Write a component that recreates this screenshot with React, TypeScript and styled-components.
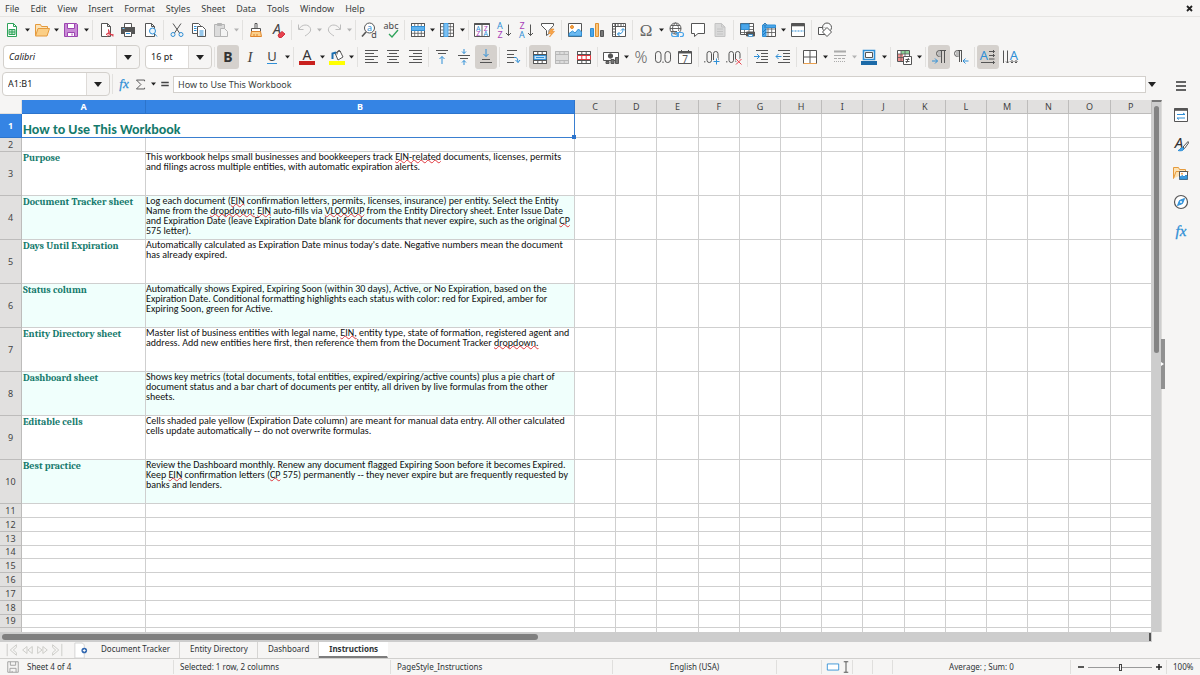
import React from "react";
import styled, { createGlobalStyle, css } from "styled-components";

const INK = "#555";
const BLUE = "#2f8fd6";
const PURPLE = "#a83fb8";
const TEAL = "#147a6c";
const UI_FONT = `"Noto Sans", "Open Sans", sans-serif`;

const GlobalStyle = createGlobalStyle`
  * { box-sizing: border-box; }
  html, body, #root { height: 100%; }
  body {
    margin: 0;
    background: #f6f5f4;
    color: #3a3f41;
    font: 9px/12px ${UI_FONT};
    overflow: hidden;
  }
  button, input, select { font: inherit; color: inherit; margin: 0; }
`;

/* ---------- icons ---------- */

const glyph = (char: string, x: number, y: number, size: number, fill: string, extra: React.SVGProps<SVGTextElement> = {}) => (
  <text x={x} y={y} textAnchor="middle" fontSize={size} fontFamily="Noto Sans, sans-serif" fill={fill} stroke="none" {...extra}>
    {char}
  </text>
);

const page = <path d="M3.5 1.5h6l3 3v10h-9z M9.5 1.5v3h3" />;
const lines = (rows: [number, number, number][]) => (
  <path d={rows.map(([x, y, w]) => `M${x} ${y}h${w}`).join("")} />
);
const gridPath = "M1.5 1.5h13v13h-13z M1.5 4.7h13 M1.5 8h13 M1.5 11.3h13 M4.7 1.5v13 M8 1.5v13 M11.3 1.5v13";
const mergeGrid = "M1.5 2.5h13v12h-13z M1.5 5.5h13 M1.5 11.5h13 M5.8 2.5v3 M10.2 2.5v3 M5.8 11.5v3 M10.2 11.5v3";

const ICONS: Record<string, React.ReactNode> = {
  newDoc: (
    <>
      <path d="M3.5 1.5h6l3 3v10h-9z" fill="#fff" stroke="#2fa35a" />
      <path d="M9.5 1.5v3h3" stroke="#2fa35a" />
      <path d="M5 7.5h6v5H5z M5 10h6 M8 7.5v5" fill="#bfe8cc" stroke="#2fa35a" />
    </>
  ),
  open: (
    <>
      <path d="M1.5 13.5v-11h5l1 2h6v3" fill="#fbe3b8" stroke="#e59a3c" />
      <path d="M1.5 14 4 6.5h11.5L13 14z" fill="#fbcf87" stroke="#e59a3c" />
    </>
  ),
  save: (
    <>
      <path d="M1.5 1.5h12l1 1v12h-13z" fill="#c98ad6" stroke="#9c45b0" />
      <path d="M4.5 1.5h7v5h-7z M4.5 10.5h7v4h-7z" fill="#fff" stroke="#9c45b0" />
      <path d="M9 11.5v2" stroke="#9c45b0" />
    </>
  ),
  pdf: (
    <>
      <g fill="#fff">{page}</g>
      <path d="M15 14.5c-2-3-4-4-7-2 2 0 3-2 2.500-5 1 4 3 6 5 5.500-2-1-5-.5-6.500 1.500" stroke="#dc3b4a" />
    </>
  ),
  print: (
    <>
      <path d="M4.5 5V1.5h7V5" fill="#fff" />
      <path d="M1 5h14v7H1z" fill="#555" stroke="none" />
      <path d="M4.5 9.5h7v5h-7z" fill="#fff" />
      <path d="M6 11.5h4" stroke={BLUE} />
      <path d="M2.5 6.5h2" stroke="#6cc0f2" />
    </>
  ),
  preview: (
    <>
      <g fill="#fff">{page}</g>
      <circle cx="10.5" cy="9" r="3" fill="#e8f4fd" stroke={BLUE} />
      <path d="m12.5 11.5 2.500 3" stroke={BLUE} />
    </>
  ),
  cut: (
    <>
      <path d="M4 1.5l6.500 9.500M12 1.5 5.500 11" />
      <circle cx="4" cy="12.5" r="2" stroke={BLUE} />
      <circle cx="12" cy="12.5" r="2" stroke={BLUE} />
    </>
  ),
  copy: (
    <>
      <path d="M1.5 1.5h6l2 2v8h-8z" fill="#fff" />
      <path d="M6.5 4.5h5l3 3v7h-8z" fill="#fff" />
      <path d="M3 4.5h2.500M3 6.5h2.500M3 8.5h2.500M8.5 9h4M8.5 11h4M8.5 13h4" stroke={BLUE} />
    </>
  ),
  paste: (
    <>
      <path d="M1.5 2.5h10v12h-10z" fill="#dcdcdc" stroke="#b5b5b5" />
      <path d="M4.5 1.5h4v2h-4z" fill="#b5b5b5" stroke="#b5b5b5" />
      <path d="M7.5 6.5h4l3 3v5h-7z" fill="#f4f4f4" stroke="#b5b5b5" />
    </>
  ),
  clone: (
    <>
      <path d="M7 1.5h2v5H7z" fill="#fff" />
      <path d="M3.5 6.5h9v3h-9z" fill="#fff" />
      <path d="M3.5 9.5h9l1 5h-11z" fill="#fbd08c" stroke="#e0852b" />
      <path d="M6 12v2M9 12v2" stroke="#e0852b" />
    </>
  ),
  clear: (
    <>
      {glyph("A", 7, 12, 14, "#444", { fontStyle: "italic" })}
      <path d="m8 13 4-3.500 3 2.500-3.500 3.500H9z" fill="#e8434f" stroke="#d02f3d" />
    </>
  ),
  undo: <path d="M1.5 2.5v5h5M2 7c3-5 9-5 11-1.500s-1 6-5 8.500" stroke="#bdbdbd" />,
  redo: <path d="M14.5 2.5v5h-5M14 7c-3-5-9-5-11-1.500s1 6 5 8.500" stroke="#bdbdbd" />,
  find: (
    <>
      <circle cx="8.5" cy="6" r="5" fill="#fff" />
      <path d="m5 10-4 4.500" strokeWidth="1.6" />
      {glyph("a", 8.5, 9, 9, BLUE)}
      {glyph("d", 13, 15.5, 9, "#444")}
    </>
  ),
  spell: (
    <>
      {glyph("abc", 8, 7, 9, "#444")}
      <path d="m6 12 3 3 6-7" stroke="#2fa35a" strokeWidth="1.3" />
    </>
  ),
  fx: glyph("fx", 8, 13, 15, BLUE, { fontStyle: "italic", fontFamily: "Liberation Serif, serif", stroke: BLUE, strokeWidth: 0.3 }),
  rows: (
    <>
      <path d="M1.5 1.5h13v13h-13z" fill="#fff" />
      <path d={gridPath} strokeWidth=".8" />
      <path d="M1.5 4.5h13v4h-13z" fill="#5fb2ee" stroke={BLUE} />
    </>
  ),
  cols: (
    <>
      <path d="M1.5 1.5h13v13h-13z" fill="#fff" />
      <path d={gridPath} strokeWidth=".8" />
      <path d="M5 1.5h4v13H5z" fill="#7cc0f2" stroke="#4ba6ea" />
    </>
  ),
  sort: (
    <>
      <path d="M.5 1.5h15v13H.5z M8 1.5v13" fill="#fff" />
      <path d="M.5 2h15" strokeWidth="2" />
      {glyph("A", 4.3, 8.5, 7, BLUE)}
      {glyph("Z", 4.3, 14, 7, PURPLE)}
      {glyph("Z", 11.7, 8.5, 7, PURPLE)}
      {glyph("A", 11.7, 14, 7, BLUE)}
    </>
  ),
  sortAsc: (
    <>
      {glyph("A", 4, 7, 9, BLUE)}
      {glyph("Z", 4, 15.5, 9, PURPLE)}
      <path d="M12.5 2.5v11M10 11l2.500 2.500L15 11" />
    </>
  ),
  sortDesc: (
    <>
      {glyph("Z", 4, 7, 9, PURPLE)}
      {glyph("A", 4, 15.5, 9, BLUE)}
      <path d="M12.5 2.5v11M10 11l2.500 2.500L15 11" />
    </>
  ),
  filter: (
    <>
      <path d="M1.5 1.5h12v2L9 8.5v3l-2.500 2v-5l-5-5z" fill="#fff" />
      <path d="m11 7-2.500 4.500h3L9.500 15l5-5.500h-2.500L14 7z" fill="#f9a64a" stroke="#e88a2a" strokeWidth=".6" />
    </>
  ),
  image: (
    <>
      <path d="M1.5 1.5h13v13h-13z" fill="#fff" />
      <circle cx="5" cy="5" r="1.5" fill="#f5a54a" stroke="#e88a2a" />
      <path d="M2 14v-2.500L5.500 9 8 11l3.500-4 3 3v4z" fill="#6bb9f0" stroke={BLUE} />
    </>
  ),
  chart: (
    <>
      <path d="M1.5 6.5h3v8h-3z" fill="#4ba6ea" stroke={BLUE} />
      <path d="M6.5 1.5h3v13h-3z" fill="#fbc57c" stroke="#e0902f" />
      <path d="M11.5 8.5h3v6h-3z" fill="#777" />
    </>
  ),
  pivot: (
    <>
      <path d="M1.5 1.5h13v13h-13z M1.5 4.5h13 M4.5 1.5v13" fill="#fff" />
      <path d="M3 3h1M6 3h7M3 6v7" strokeDasharray="2 1" />
      <path d="M6.5 12c4 0 5.500-1.500 5.500-5M10 8.5l2-2 2 2M8.5 10l-2 2 2 2" stroke={BLUE} />
    </>
  ),
  omega: glyph("Ω", 8, 14, 17, "#666", { fontFamily: "Liberation Serif, serif" }),
  link: (
    <>
      <circle cx="7.5" cy="6.5" r="5.5" fill="#fff" />
      <path d="M2 6.5h11M3 3.5h9M3 9.5h6M7.5 1c-4 3-4 8 0 11M7.5 1c3.500 3 3.500 6 3 8" strokeWidth=".9" />
      <path d="M7 10.5h1.500a2 2 0 0 1 0 4H5.5a2 2 0 0 1-1-3.700M11 14.5a2 2 0 0 1 0-4h2.500a2 2 0 0 1 0 4H12" stroke="#4aa5ea" strokeWidth="1.2" />
    </>
  ),
  comment: <path d="M1.5 1.5h13v10H8l-3.500 3v-3h-3z" fill="#fff" />,
  note: (
    <>
      <path d="M3 1.5h6.500l3.500 3.500v9.500H3z" fill="#d9d9d9" stroke="#c4c4c4" />
      <path d="M5 7h6M5 9.5h6M5 12h6M9.5 1.5V5H13" stroke="#c4c4c4" />
    </>
  ),
  printArea: (
    <>
      <path d="M1.5 1.5h13v11h-13z" fill="#fff" />
      <path d="M1.5 4.5h13M1.5 7.5h13M1.5 10.5h13M5.5 1.5v11M10 1.5v11" strokeWidth=".8" />
      <path d="M2 2h8v5.500H2z" fill="#4ba6ea" stroke={BLUE} />
      <path d="M7.5 10h8v4h-8z" fill="#555" />
      <path d="M9.5 12.5h4v2h-4z" fill="#fff" stroke={BLUE} strokeWidth=".8" />
    </>
  ),
  freeze: (
    <>
      <path d="M3.5 3.5h11v11h-11z" fill="#fff" />
      <path d="M3.5 7h11M3.5 10.5h11M7 3.5v11M10.7 3.5v11" strokeWidth=".8" />
      <path d="M1.5 3h13v2.500H5v9H1.5z" fill="#4ba6ea" stroke={BLUE} />
      <path d="M2 13l3-3M2 10l3-3M4 6V1M2 3l2-2 2 2" stroke="#1c6fb0" strokeWidth=".8" />
    </>
  ),
  split: (
    <>
      <path d="M1.5 1.5h13v13h-13z" fill="#fff" />
      <path d="M1.5 3h13" strokeWidth="2.6" />
      <path d="M1.5 9h13" stroke={BLUE} strokeDasharray="2 1" />
    </>
  ),
  shapes: (
    <>
      <path d="M1.5 5.5h7v7h-7z" fill="#fff" />
      <circle cx="10" cy="5.5" r="4.5" fill="#fff" fillOpacity=".7" />
      <path d="m10 5.5 4.500 4.500-4.500 4.500L5.500 10z" fill="#fff" />
    </>
  ),
  bold: glyph("B", 8, 13, 14, "#333", { fontWeight: 700 }),
  italic: glyph("I", 8, 13, 15, "#444", { fontStyle: "italic", fontFamily: "Liberation Serif, serif" }),
  underline: (
    <>
      {glyph("U", 8, 12, 13, "#444")}
      <path d="M3 14.5h10" stroke={BLUE} />
    </>
  ),
  fontColor: (
    <>
      {glyph("A", 8, 11, 14, "#333")}
      <path d="M0 12h16v4H0z" fill="#c9211e" stroke="none" />
    </>
  ),
  highlight: (
    <>
      <path d="m6 4 5-2 3 6-5 3z" fill="#fff" />
      <path d="M8 5.5c0-5 3-5 3.500-2.500" />
      <path d="M3.5 10V4.500L7 3.5" stroke="#1c6fb0" strokeWidth="2" />
      <path d="M0 12h16v4H0z" fill="#ffff00" stroke="none" />
    </>
  ),
  alignLeft: lines([[2, 1.5, 13], [2, 4.5, 9], [2, 7.5, 13], [2, 10.5, 9], [2, 13.5, 13]]),
  alignCenter: lines([[2, 1.5, 12], [4, 4.5, 8], [2, 7.5, 12], [4, 10.5, 8], [2, 13.5, 12]]),
  alignRight: lines([[2, 1.5, 13], [6, 4.5, 9], [2, 7.5, 13], [6, 10.5, 9], [2, 13.5, 13]]),
  top: (
    <>
      {lines([[2, 1.5, 12], [4, 4.5, 8]])}
      <path d="M8 15V7.5M5.5 10 8 7.5l2.500 2.500" stroke={BLUE} />
    </>
  ),
  middle: (
    <>
      {lines([[2, 6.5, 12], [4, 9.5, 8]])}
      <path d="M8 0v4.500M6 2.5l2 2 2-2M8 16v-4.500M6 13.5l2-2 2 2" stroke={BLUE} />
    </>
  ),
  bottom: (
    <>
      {lines([[2, 13.5, 12], [4, 10.5, 8]])}
      <path d="M8 0v7.500M5.500 5 8 7.5 10.500 5" stroke={BLUE} />
    </>
  ),
  wrap: (
    <>
      {lines([[2, 1.5, 10], [2, 5.5, 7], [2, 8.5, 7], [2, 13.5, 7]])}
      <path d="M9 8.5h2q2 0 2 5M10.5 11l2.500 2.500 2-2.500" stroke={BLUE} />
    </>
  ),
  merge: (
    <>
      <path d="M1.5 2.5h13v12h-13z" fill="#fff" />
      <path d={mergeGrid} />
      <path d="M2 6.5h12v4H2z" fill="#bfe0fa" stroke={BLUE} />
      <path d="M4 8.5h8" stroke={BLUE} />
    </>
  ),
  mergeGray: (
    <>
      <path d="M1.5 2.5h13v12h-13z" fill="#dcdcdc" stroke="#b8b8b8" />
      <path d={mergeGrid} stroke="#b8b8b8" />
    </>
  ),
  unmerge: (
    <>
      <path d="M1.5 2.5h13v12h-13z" fill="#fff" />
      <path d={mergeGrid} />
      <path d="M1.5 6.5h13v4h-13zM5.8 6.5v4M10.2 6.5v4" fill="#fff" stroke="#e0383f" />
    </>
  ),
  currency: (
    <>
      <path d="M.5 3.5h15v8H.5z" fill="#fff" />
      <circle cx="7.5" cy="7" r="2.2" fill="#555" />
      <path d="M3 12.5h3v2H3zM8 10.5h3v4H8zM12.5 8.5h3v6h-3z" fill="#777" />
    </>
  ),
  percent: glyph("%", 8, 14, 16, "#666", { fontWeight: 300 }),
  number: (
    <>
      <rect x=".5" y="2.5" width="5.5" height="11" rx="2.7" />
      <rect x="10" y="2.5" width="5.5" height="11" rx="2.7" />
      <path d="M8 12.5v1.500" />
    </>
  ),
  date: (
    <>
      <path d="M1.5 2.5h13v12h-13z" fill="#fff" />
      <path d="M1.5 3.5h13" strokeWidth="2" />
      <path d="M4.5 1v2M11.5 1v2" />
      {glyph("7", 8, 13.5, 10, "#555")}
    </>
  ),
  addDecimal: (
    <>
      <path d="M.8 12v1.500" />
      <rect x="3" y="2.5" width="4.5" height="11" rx="2.2" />
      <rect x="9.5" y="2.5" width="4.5" height="11" rx="2.2" />
      <path d="M9 12.5h7M12.5 9v7" stroke="#f6f5f4" strokeWidth="3" />
      <path d="M9.5 12.5h6M12.5 9.5v6" stroke={BLUE} />
    </>
  ),
  delDecimal: (
    <>
      <path d="M.8 12v1.500" />
      <rect x="3" y="2.5" width="4.5" height="11" rx="2.2" />
      <rect x="9.5" y="2.5" width="4.5" height="11" rx="2.2" />
      <path d="m10 10 5.500 5.500m0-5.500L10 15.5" stroke="#f6f5f4" strokeWidth="3" />
      <path d="m10 10 5.500 5.500m0-5.500L10 15.5" stroke="#e8434f" />
    </>
  ),
  indent: (
    <>
      {lines([[3, 1.5, 12], [8, 4.5, 7], [8, 7.5, 7], [8, 10.5, 7], [3, 13.5, 12]])}
      <path d="M1 7.5h5.500M4 5 6.500 7.5 4 10" stroke={BLUE} />
    </>
  ),
  outdent: (
    <>
      {lines([[3, 1.5, 12], [8, 4.5, 7], [8, 7.5, 7], [8, 10.5, 7], [3, 13.5, 12]])}
      <path d="M1 7.5h5.500M3.500 5 1 7.5 3.500 10" stroke={BLUE} />
    </>
  ),
  borders: (
    <>
      <path d="M1.5 1.5h13v13h-13zM8 1.5v13M1.5 8h13" fill="#fff" />
      <path d="M1.5 14.5h13" stroke="#eba04e" />
    </>
  ),
  lineStyle: (
    <g stroke="#ababab">
      <path d="M2 2.5h12" strokeWidth="2" />
      <path d="M2 6.5h12" />
      <path d="M2 9.5h12" strokeDasharray="3 1" />
      <path d="M2 12.5h12" strokeDasharray="1 1" />
    </g>
  ),
  lineColor: (
    <>
      <path d="M2.5 1.5h11v9h-11z" fill="#fff" stroke={BLUE} strokeWidth="1.6" />
      <path d="M4.5 3.5h7v5h-7z" />
      <path d="M0 12h16v4H0z" fill="#1c6aa8" stroke="none" />
    </>
  ),
  conditional: (
    <>
      <path d="M1.5 1.5h12v11h-12z" fill="#fff" />
      <path d="M5 2h8v3H5z" fill="#8fd49b" stroke="none" />
      <path d="M2 5h5v7H2z" fill="#f0908f" stroke="none" />
      <path d="M1.5 5h12M1.5 8.5h12M5 1.5v11M9 1.5v11" strokeWidth=".8" />
      <path d="M7.5 7.5h8v8h-8z" fill="#fff" />
      <path d="M9.5 10.5h4M9.5 12.5h4M12.5 9l-2 5" />
    </>
  ),
  ltr: (
    <>
      <path d="M15 1.5H8.5a3 3 0 0 0 0 6h1M10.5 1.5V14M13.5 1.5V14" />
      <path d="M8.5 2a3 3 0 0 0 0 5.500h1.500V2z" fill="#bbb" stroke="none" />
      <path d="M1 12h5.500M4 9.5 6.500 12 4 14.5" stroke={BLUE} />
    </>
  ),
  rtl: (
    <>
      <path d="M9 1.5H4.500a3 3 0 0 0 0 6h1M6.500 1.5V13M8.5 1.5V13" />
      <path d="M4.5 2a3 3 0 0 0 0 5.500H6V2z" fill="#bbb" stroke="none" />
      <path d="M15.5 12H10M12.5 9.5 10 12l2.500 2.500" stroke={BLUE} />
    </>
  ),
  textLr: (
    <>
      {glyph("A", 4, 11, 13, BLUE)}
      <path d="M9 2.5h5.500M9 6.5h5.500M9 10h5.500M1 13.5h13.500M13 1l1.500 1.500L13 4M13 5l1.500 1.500L13 8M13 12l1.500 1.500L13 15" />
    </>
  ),
  textTb: (
    <>
      {glyph("A", 12, 11, 13, BLUE)}
      <path d="M1.5 1.5V14M5.5 1.5V14M10 11v3M14 11v3M4 12.5 5.500 14 7 12.5M8.5 12.5 10 14l1.500-1.500M12.5 12.5 14 14l1.500-1.500" />
    </>
  ),
  sigma: <path d="M13 4V2.5H3L8.500 8 3 13.5h10V12" strokeWidth="1.2" />,
  equals: <path d="M3 6h10M3 10h10" stroke="#444" strokeWidth="1.8" />,
  menu: <path d="M3 4h10M3 8h10M3 12h10" stroke="#333" strokeWidth="1.6" />,
  properties: (
    <>
      <path d="M1.5 1.5h13v13h-13z" fill="#fff" />
      <path d="M1.5 2.5h13" strokeWidth="2.6" />
      <path d="M4 7.5h8M4 11h8M10 6l2 1.500M6 12.5 4 11" stroke={BLUE} />
    </>
  ),
  styles: (
    <>
      {glyph("A", 6, 12, 15, "#333", { fontStyle: "italic" })}
      <path d="M15 5.5 10 11l1.500 1.500L15.500 7z" fill="#fff" />
      <path d="M5 14.5c2 0 2-3 4.500-3l1.500 1.500c-1 2-4 2-6 1.500z" fill="#4ba6ea" stroke={BLUE} />
    </>
  ),
  gallery: (
    <>
      <path d="M.5 13.5v-11h5l1 2h6v2M.5 13.5 3 6.500h12.500" fill="#fde3b5" stroke="#e59a3c" />
      <path d="M6.5 6.5h8v8h-8z" fill="#fff" />
      <path d="M7 14v-2l2.500-1.500L11 12l2-2 1 1v3z" fill="#3f9be0" stroke={BLUE} />
      <circle cx="9" cy="8.7" r=".6" fill="#f5a54a" stroke="#f5a54a" />
    </>
  ),
  navigator: (
    <>
      <circle cx="8" cy="8" r="6.5" fill="#fff" strokeWidth="1.2" />
      <path d="M11.5 4.5 9.500 9.5 4.500 11.5 6.500 6.5z" fill="#3f9be0" stroke={BLUE} />
      <circle cx="8" cy="8" r="1" fill="#fff" stroke="none" />
    </>
  ),
  first: <path d="M2.5 1v14M13 2 6 8l7 6v-3L9.500 8 13 5z" stroke="#c8c8c4" />,
  prev: <path d="M8 4 3 8l5 4zM14 4 9 8l5 4z" stroke="#c8c8c4" />,
  next: <path d="M3 4l5 4-5 4zM9 4l5 4-5 4z" stroke="#c8c8c4" />,
  last: <path d="M13.5 1v14M3 2l7 6-7 6v-3L6.500 8 3 5z" stroke="#c8c8c4" />,
  addSheet: (
    <>
      <path d="M2 0h8l2 2v14H2z" fill="#fff" stroke="#d2d2d2" />
      <circle cx="12" cy="8" r="3" fill="#3268b0" stroke="none" />
      <path d="M10.5 8h3M12 6.5v3" stroke="#fff" />
    </>
  ),
  saved: (
    <g stroke="#9a9a9a">
      <path d="M2 2h12v12H2zM5 2v4h6V2M4.5 14V9.500h7V14M7 12.5v1.500" />
    </g>
  ),
  selMode: <path d="M1.5 4.5h13v7h-13z" fill="#fff" stroke={BLUE} />,
  ibeam: <path d="M5 1h6M5 15h6M8 1v14" strokeWidth="1.3" />,
};

const Svg = styled.svg`
  display: block;
  flex: none;
  overflow: visible;
`;

const Icon = ({ name, size = 16 }: { name: string; size?: number }) => (
  <Svg width={size} height={size} viewBox="0 0 16 16" fill="none" stroke={INK} aria-hidden>
    {ICONS[name]}
  </Svg>
);

const Arrow = ({ big, off }: { big?: boolean; off?: boolean }) => (
  <Svg width={big ? 8 : 5} height={big ? 5 : 4} viewBox="0 0 8 5" aria-hidden>
    <path d="M0 0h8L4 5z" fill={off ? "#b4b4b4" : "#222"} />
  </Svg>
);

/* ---------- window chrome ---------- */

const Window = styled.div`
  display: flex;
  flex-direction: column;
  height: 100vh;
  background: #f6f5f4;
`;

const MenuBar = styled.nav`
  flex: none;
  display: flex;
  gap: 1px;
  height: 17px;
  border-bottom: 1px solid #e6e5e3;
`;

const MenuButton = styled.button`
  height: 17px;
  padding: 0 5px;
  border: 0;
  background: none;
`;

const CloseButton = styled(MenuButton)`
  margin-left: auto;
  padding: 0 7px;
`;

const Toolbar = styled.div<{ $height: number }>`
  flex: none;
  display: flex;
  align-items: center;
  height: ${(p) => p.$height}px;
  padding-left: 1px;
`;

const ToolButton = styled.button<{ $on?: boolean }>`
  flex: none;
  display: flex;
  align-items: center;
  justify-content: center;
  width: 22px;
  height: 24px;
  padding: 0;
  border: 0;
  border-radius: 3px;
  background: ${(p) => (p.$on ? "#d5d1cd" : "none")};
`;

const DropButton = styled.button<{ $tight?: boolean }>`
  flex: none;
  display: flex;
  align-items: center;
  justify-content: flex-end;
  width: ${(p) => (p.$tight ? 7 : 8)}px;
  height: 24px;
  padding: 0 1px 0 0;
  border: 0;
  background: none;
`;

const Separator = styled.span`
  flex: none;
  width: 1px;
  height: 20px;
  margin: 0 2px;
  background: #e2e1df;
`;

type Tool = "|" | { icon: string; drop?: "wide" | "tight"; on?: boolean; off?: boolean };

const t = (icon: string, extra: object = {}): Tool => ({ icon, ...extra });

const standardTools: Tool[] = [
  t("newDoc", { drop: "wide" }), t("open", { drop: "tight" }), t("save", { drop: "wide" }), "|",
  t("pdf"), t("print"), t("preview"), "|",
  t("cut"), t("copy"), t("paste", { drop: "wide", off: true }), "|",
  t("clone"), t("clear"), "|",
  t("undo", { drop: "tight", off: true }), t("redo", { drop: "wide", off: true }), "|",
  t("find"), t("spell"), "|",
  t("rows", { drop: "tight" }), t("cols", { drop: "wide" }), "|",
  t("sort"), t("sortAsc"), t("sortDesc"), t("filter"), "|",
  t("image"), t("chart"), t("pivot"), "|",
  t("omega", { drop: "wide" }), t("link"), t("comment"), t("note"), "|",
  t("printArea"), t("freeze", { drop: "tight" }), t("split"), "|",
  t("shapes"),
];

const formatTools: Tool[] = [
  t("bold", { on: true }), t("italic"), t("underline", { drop: "wide" }), "|",
  t("fontColor", { drop: "wide" }), t("highlight", { drop: "tight" }), "|",
  t("alignLeft"), t("alignCenter"), t("alignRight"), "|",
  t("top"), t("middle"), t("bottom", { on: true }), "|",
  t("wrap"), "|",
  t("merge", { on: true }), t("mergeGray"), t("unmerge"), "|",
  t("currency", { drop: "wide" }), t("percent"), t("number"), t("date"), "|",
  t("addDecimal"), t("delDecimal"), "|",
  t("indent"), t("outdent"), "|",
  t("borders", { drop: "wide" }), t("lineStyle", { drop: "tight", off: true }), t("lineColor", { drop: "wide" }), "|",
  t("conditional", { drop: "wide" }), "|",
  t("ltr", { on: true }), t("rtl"), "|",
  t("textLr", { on: true }), t("textTb"),
];

const Tools = ({ items }: { items: Tool[] }) => (
  <>
    {items.map((item, i) =>
      item === "|" ? (
        <Separator key={i} />
      ) : (
        <React.Fragment key={i}>
          <ToolButton $on={item.on} disabled={item.off} aria-label={item.icon}>
            <Icon name={item.icon} />
          </ToolButton>
          {item.drop && (
            <DropButton $tight={item.drop === "tight"} disabled={item.off} aria-label={`${item.icon} options`}>
              <Arrow off={item.off} />
            </DropButton>
          )}
        </React.Fragment>
      )
    )}
  </>
);

const ComboBox = styled.label<{ $width: number }>`
  flex: none;
  display: flex;
  align-items: center;
  width: ${(p) => p.$width}px;
  height: 24px;
  border: 1px solid #d3d0cc;
  border-radius: 4px;
  background: linear-gradient(#fff, #fff) left / calc(100% - 23px) 100% no-repeat, #f6f5f4;
  overflow: hidden;
`;

const ComboSelect = styled.select<{ $italic?: boolean }>`
  appearance: none;
  flex: 1;
  min-width: 0;
  height: 22px;
  padding: 0 5px;
  border: 0;
  background: none;
  color: #222;
  outline: 0;
  ${(p) => p.$italic && css`font-style: italic;`}
`;

const ComboArrow = styled.span`
  flex: none;
  display: flex;
  align-items: center;
  justify-content: center;
  width: 23px;
  height: 22px;
  border-left: 1px solid #dedbd8;
  pointer-events: none;
`;

const Combo = ({ value, label, width, italic }: { value: string; label: string; width: number; italic?: boolean }) => (
  <ComboBox $width={width}>
    <ComboSelect aria-label={label} $italic={italic}>
      <option>{value}</option>
    </ComboSelect>
    <ComboArrow>
      <Arrow big />
    </ComboArrow>
  </ComboBox>
);

const ComboGroup = styled.div`
  display: flex;
  gap: 5px;
  padding: 0 0 0 2px;
`;

const Work = styled.div`
  flex: 1;
  min-height: 0;
  display: flex;
`;

const Main = styled.main`
  flex: 1;
  min-width: 0;
  display: flex;
  flex-direction: column;
`;

const FormulaBar = styled.div`
  flex: none;
  display: flex;
  align-items: center;
  height: 29px;
  padding: 0 6px 3px 2px;
`;

const FormulaTools = styled.div`
  display: flex;
  align-items: center;
  width: 58px;
`;

const FormulaButton = styled.button`
  flex: 1 1 auto;
  display: flex;
  justify-content: center;
  padding: 0;
  border: 0;
  background: none;
`;

const FormulaInput = styled.input`
  flex: 1;
  min-width: 0;
  height: 17px;
  padding: 0 4px;
  border: 1px solid #d3d0cc;
  background: #fff;
  outline: 0;
`;

const FormulaExpand = styled.button`
  display: flex;
  align-items: center;
  justify-content: flex-end;
  width: 10px;
  padding: 0;
  border: 0;
  background: none;
`;

/* ---------- sheet ---------- */

const SheetArea = styled.div`
  flex: 1;
  min-height: 0;
  display: flex;
`;

const SheetView = styled.div`
  flex: 1;
  min-width: 0;
  overflow: hidden;
  background: #fff;
`;

const Sheet = styled.table`
  width: 100%;
  table-layout: fixed;
  border-collapse: separate;
  border-spacing: 0;
`;

const HeadCell = styled.th<{ $on?: boolean }>`
  padding: 0;
  border-right: 1px solid ${(p) => (p.$on ? "#2c74cc" : "#bdbcbb")};
  border-bottom: 1px solid ${(p) => (p.$on ? "#2c74cc" : "#bdbcbb")};
  background: ${(p) => (p.$on ? "#3584e4" : "#e1e0df")};
  color: ${(p) => (p.$on ? "#fff" : "#444")};
  font-weight: ${(p) => (p.$on ? 700 : 400)};
  line-height: 12px;
  text-align: center;
`;

const CornerCell = styled.td`
  border-right: 1px solid #e1e0df;
  border-bottom: 1px solid #e1e0df;
  background: #f6f5f4;
`;

const Cell = styled.td<{ $tint?: boolean }>`
  padding: 0;
  border-right: 1px solid #cfcfcf;
  border-bottom: 1px solid #cfcfcf;
  background: ${(p) => (p.$tint ? "#f0fffc" : "#fff")};
  vertical-align: top;
  line-height: 10px;
  white-space: nowrap;
`;

const TitleCell = styled(Cell)`
  position: relative;
  padding-left: 1px;
  color: ${TEAL};
  font: 700 14px/14px Carlito, Lato, sans-serif;
  vertical-align: bottom;
  &::before {
    content: "";
    position: absolute;
    inset: 0 -1px -1px 0;
    border: solid #3a7fd0;
    border-width: 0 1px 1px 0;
  }
  &::after {
    content: "";
    position: absolute;
    right: -2px;
    bottom: -2px;
    width: 4px;
    height: 4px;
    background: #2c74cc;
  }
`;

const LabelCell = styled(Cell)`
  padding-left: 1px;
  color: ${TEAL};
  font: 700 10px/13px Caladea, "Liberation Serif", serif;
`;

const TextCell = styled(Cell)`
  color: #111;
  font: 10px/10px Carlito, Lato, sans-serif;
`;

const Line = styled.div`
  height: 10px;
`;

const Misspelt = styled.span`
  text-decoration: underline wavy #e0383f 1px;
  text-decoration-skip-ink: none;
  text-underline-offset: -1px;
`;

/* Words between asterisks carry the spelling mark. */
const content: [string, string[]][] = [
  ["Purpose", ["This workbook helps small businesses and bookkeepers track *EIN-related* documents, licenses, permits", "and filings across multiple entities, with automatic expiration alerts."]],
  ["Document Tracker sheet", ["Log each document (*EIN* confirmation letters, permits, licenses, insurance) per entity. Select the Entity", "Name from the *dropdown;* *EIN* auto-fills via *VLOOKUP* from the Entity Directory sheet. Enter Issue Date", "and Expiration Date (leave Expiration Date blank for documents that never expire, such as the original *CP*", "575 letter)."]],
  ["Days Until Expiration", ["Automatically calculated as Expiration Date minus today's date. Negative numbers mean the document", "has already expired."]],
  ["Status column", ["Automatically shows Expired, Expiring Soon (within 30 days), Active, or No Expiration, based on the", "Expiration Date. Conditional formatting highlights each status with color: red for Expired, amber for", "Expiring Soon, green for Active."]],
  ["Entity Directory sheet", ["Master list of business entities with legal name, *EIN,* entity type, state of formation, registered agent and", "address. Add new entities here first, then reference them from the Document Tracker *dropdown.*"]],
  ["Dashboard sheet", ["Shows key metrics (total documents, total entities, expired/expiring/active counts) plus a pie chart of", "document status and a bar chart of documents per entity, all driven by live formulas from the other", "sheets."]],
  ["Editable cells", ["Cells shaded pale yellow (Expiration Date column) are meant for manual data entry. All other calculated", "cells update automatically -- do not overwrite formulas."]],
  ["Best practice", ["Review the Dashboard monthly. Renew any document flagged Expiring Soon before it becomes Expired.", "Keep *EIN* confirmation letters (*CP* 575) permanently -- they never expire but are frequently requested by", "banks and lenders."]],
];

const columns = "CDEFGHIJKLMNOP".split("");
const emptyRows: [string, number][] = [
  ["11", 14], ["12", 14], ["13", 14], ["14", 13], ["15", 14], ["16", 14], ["17", 14], ["18", 14], ["19", 13], ["", 14],
];

const withSpelling = (line: string) =>
  line.split("*").map((part, i) => (i % 2 ? <Misspelt key={i}>{part}</Misspelt> : part));

const blanks = columns.map((c) => <Cell key={c} />);

const Row = styled.tr<{ $height: number }>`
  height: ${(p) => p.$height}px;
`;

const VerticalScroll = styled.div`
  flex: none;
  width: 10px;
  padding: 4px 2px 0;
  border-top: 2px solid #777;
  border-right: 1px solid #dcdbd9;
  background: #cdcdcd;
`;

const VerticalThumb = styled.div`
  height: 47%;
  border-radius: 3px;
  background: #838383;
`;

const HorizontalScroll = styled.div`
  flex: none;
  display: flex;
  align-items: center;
  justify-content: space-between;
  height: 10px;
  margin-right: 10px;
  padding: 0 1px 0 2px;
  background: #cdcdcd;
`;

const HorizontalThumb = styled.div`
  width: calc(100% * 7 / 15);
  height: 6px;
  border-radius: 3px;
  background: #7f7f7f;
`;

const SplitHandle = styled.div`
  width: 2px;
  height: 8px;
  background: #555;
`;

/* ---------- tabs, status, sidebar ---------- */

const TabBar = styled.div`
  flex: none;
  display: flex;
  align-items: center;
  height: 17px;
  padding-left: 5px;
  border-bottom: 1px solid #d0cfcd;
  font-size: 8px;
`;

const NavButton = styled.button`
  width: 15px;
  padding: 0;
  border: 0;
  background: none;
`;

const AddButton = styled(NavButton)`
  margin: 0 3px 0 8px;
`;

const Tab = styled.button<{ $on?: boolean }>`
  align-self: stretch;
  display: flex;
  align-items: flex-start;
  padding: 1px 9px 0 10px;
  border: 0;
  border-right: 1px solid ${(p) => (p.$on ? "transparent" : "#d6d5d3")};
  border-bottom: ${(p) => (p.$on ? "2px solid #7d7d7d" : "0")};
  background: ${(p) => (p.$on ? "#fff" : "none")};
  font-weight: ${(p) => (p.$on ? 700 : 400)};
  line-height: 12px;
  color: #2e3436;
`;

const StatusBar = styled.footer`
  flex: none;
  display: grid;
  grid-template-columns: 174px 217px 222px 164px 45px 31px 20px 20px 1fr 96px 33px;
  align-items: center;
  height: 16px;
  font-size: 8px;
  color: #2e3436;
`;

const StatusItem = styled.div<{ $center?: boolean }>`
  display: flex;
  align-items: center;
  justify-content: ${(p) => (p.$center ? "center" : "space-between")};
  height: 14px;
  padding: 0 6px;
  border-right: 1px solid #e0dfdd;
  white-space: nowrap;
  &:last-child { border: 0; }
`;

const StatusDocument = styled(StatusItem)`
  justify-content: flex-start;
  gap: 7px;
`;

const StatusMode = styled(StatusItem)`
  justify-content: flex-start;
  padding: 0 0 0 4px;
`;

const StatusZoom = styled(StatusItem)`
  padding: 0 3px 0 6px;
`;

const ZoomButton = styled.button`
  width: 8px;
  padding: 0;
  border: 0;
  background: none;
`;

const ZoomSlider = styled.input`
  appearance: none;
  flex: 0 1 64px;
  min-width: 0;
  height: 8px;
  background: linear-gradient(#9a9a9a, #9a9a9a) center / 100% 1px no-repeat;
  &::-webkit-slider-thumb {
    appearance: none;
    width: 3px;
    height: 7px;
    border: 1px solid #444;
    background: #f6f5f4;
  }
`;

const Sidebar = styled.aside`
  flex: none;
  position: relative;
  display: flex;
  flex-direction: column;
  align-items: center;
  gap: 5px;
  width: 38px;
  padding-top: 3px;
  border-bottom: 1px solid #d0cfcd;
`;

const SidebarGrip = styled.button`
  position: absolute;
  left: -1px;
  top: 268px;
  width: 4px;
  height: 50px;
  padding: 0;
  border: 0;
  background: #919191;
  &::after {
    content: "";
    display: block;
    border: solid transparent;
    border-width: 2px 0 2px 3px;
    border-left-color: #fff;
    width: 0;
  }
`;

const menus = ["File", "Edit", "View", "Insert", "Format", "Styles", "Sheet", "Data", "Tools", "Window", "Help"];

export default function App() {
  return (
    <Window>
      <GlobalStyle />
      <MenuBar>
        {menus.map((m) => (
          <MenuButton key={m}>{m}</MenuButton>
        ))}
        <CloseButton aria-label="Close document">
          <Svg width="7" height="7" viewBox="0 0 7 7">
            <path d="m1 1 5 5m0-5L1 6" stroke="#222" strokeWidth="1.8" />
          </Svg>
        </CloseButton>
      </MenuBar>
      <Toolbar $height={26}>
        <Tools items={standardTools} />
      </Toolbar>
      <Toolbar $height={28}>
        <ComboGroup>
          <Combo value="Calibri" label="Font name" width={137} italic />
          <Combo value="16 pt" label="Font size" width={67} />
        </ComboGroup>
        <Separator />
        <Tools items={formatTools} />
      </Toolbar>
      <Work>
        <Main>
          <FormulaBar>
            <Combo value="A1:B1" label="Name box" width={108} />
            <Separator />
            <FormulaTools>
              <FormulaButton aria-label="Function wizard"><Icon name="fx" size={14} /></FormulaButton>
              <FormulaButton aria-label="Sum"><Icon name="sigma" size={13} /></FormulaButton>
              <FormulaButton aria-label="Select function"><Arrow /></FormulaButton>
              <FormulaButton aria-label="Formula"><Icon name="equals" size={12} /></FormulaButton>
            </FormulaTools>
            <FormulaInput aria-label="Formula" defaultValue="How to Use This Workbook" />
            <FormulaExpand aria-label="Expand formula bar"><Arrow big /></FormulaExpand>
          </FormulaBar>
          <SheetArea>
            <SheetView>
              <Sheet>
                <colgroup>
                  <col width={22} />
                  <col width={124} />
                  <col width={429} />
                  {columns.map((c) => <col key={c} />)}
                </colgroup>
                <thead>
                  <Row $height={14}>
                    <CornerCell />
                    <HeadCell $on>A</HeadCell>
                    <HeadCell $on>B</HeadCell>
                    {columns.map((c) => <HeadCell key={c}>{c}</HeadCell>)}
                  </Row>
                </thead>
                <tbody>
                  <Row $height={24}>
                    <HeadCell $on>1</HeadCell>
                    <TitleCell colSpan={2}>How to Use This Workbook</TitleCell>
                    {blanks}
                  </Row>
                  <Row $height={14}>
                    <HeadCell>2</HeadCell>
                    <Cell />
                    <Cell />
                    {blanks}
                  </Row>
                  {content.map(([label, text], i) => (
                    <Row $height={44} key={label}>
                      <HeadCell>{i + 3}</HeadCell>
                      <LabelCell $tint={i % 2 === 1}>{label}</LabelCell>
                      <TextCell $tint={i % 2 === 1}>
                        {text.map((line) => <Line key={line}>{withSpelling(line)}</Line>)}
                      </TextCell>
                      {blanks}
                    </Row>
                  ))}
                  {emptyRows.map(([label, height]) => (
                    <Row $height={height} key={label}>
                      <HeadCell>{label}</HeadCell>
                      <Cell />
                      <Cell />
                      {blanks}
                    </Row>
                  ))}
                </tbody>
              </Sheet>
            </SheetView>
            <VerticalScroll><VerticalThumb /></VerticalScroll>
          </SheetArea>
          <HorizontalScroll>
            <HorizontalThumb />
            <SplitHandle />
          </HorizontalScroll>
          <TabBar>
            {["first", "prev", "next", "last"].map((n) => (
              <NavButton key={n} aria-label={n}><Icon name={n} size={14} /></NavButton>
            ))}
            <AddButton aria-label="Add sheet"><Icon name="addSheet" size={15} /></AddButton>
            <Tab>Document Tracker</Tab>
            <Tab>Entity Directory</Tab>
            <Tab>Dashboard</Tab>
            <Tab $on>Instructions</Tab>
          </TabBar>
        </Main>
        <Sidebar>
          {["menu", "properties", "styles", "gallery", "navigator", "fx"].map((n) => (
            <ToolButton key={n} aria-label={n}><Icon name={n} /></ToolButton>
          ))}
          <SidebarGrip aria-label="Hide sidebar" />
        </Sidebar>
      </Work>
      <StatusBar>
        <StatusDocument><Icon name="saved" size={14} />Sheet 4 of 4</StatusDocument>
        <StatusItem>Selected: 1 row, 2 columns</StatusItem>
        <StatusItem>PageStyle_Instructions</StatusItem>
        <StatusItem $center>English (USA)</StatusItem>
        <StatusItem />
        <StatusMode><Icon name="selMode" size={14} /><Icon name="ibeam" size={12} /></StatusMode>
        <StatusItem />
        <StatusItem />
        <StatusItem $center>Average: ; Sum: 0</StatusItem>
        <StatusZoom>
          <ZoomButton aria-label="Zoom out">
            <Svg width="8" height="8" viewBox="0 0 8 8"><path d="M1 4h6" stroke="#222" strokeWidth="1.5" /></Svg>
          </ZoomButton>
          <ZoomSlider type="range" aria-label="Zoom" defaultValue={50} />
          <ZoomButton aria-label="Zoom in">
            <Svg width="8" height="8" viewBox="0 0 8 8"><path d="M1 4h6M4 1v6" stroke="#222" strokeWidth="1.5" /></Svg>
          </ZoomButton>
        </StatusZoom>
        <StatusItem>100%</StatusItem>
      </StatusBar>
    </Window>
  );
}
